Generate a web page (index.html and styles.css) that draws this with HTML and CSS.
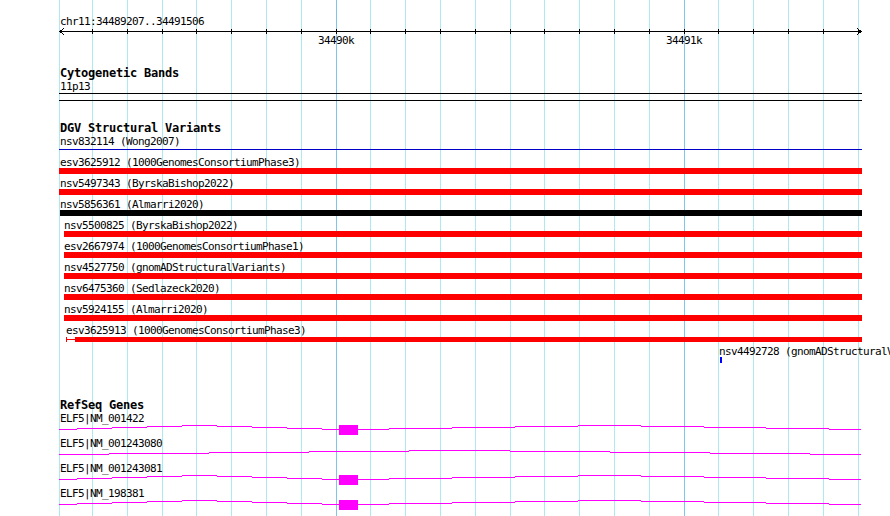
FILE: index.html
```html
<!DOCTYPE html>
<html>
  <head>
    <meta charset="UTF-8" />
    <title>chr11:34489207..34491506</title>
    <link rel="stylesheet" href="styles.css">
  </head>

  <body>
    <div id="browser">
      <!-- 网格线：每 100bp 一条，每 1kb 一条深色 -->
      <div class="grid">
        <span class="first"></span>
        <span></span><span></span><span></span><span></span><span></span><span></span><span></span>
        <span class="major"></span>
        <span></span><span></span><span></span><span></span><span></span><span></span><span></span><span></span><span></span>
        <span class="major"></span>
        <span></span><span></span><span></span><span></span><span></span>
      </div>

      <div class="panel">
        <!-- 标尺 -->
        <div class="ruler">
          <div class="label">chr11:34489207..34491506</div>
          <svg class="axis" width="803" height="20">
            <path d="M1 3.5H802M5 0L1 3.5L5 7M798 0L802 3.5L798 7" />
            <path d="M33.5 1V6M68.5 1V6M103.5 1V6M137.5 1V6M172.5 1V6M207.5 1V6M242.5 1V6M277.5 1V6M311.5 1V6M346.5 1V6M381.5 1V6M416.5 1V6M451.5 1V6M485.5 1V6M520.5 1V6M555.5 1V6M590.5 1V6M625.5 1V6M659.5 1V6M694.5 1V6M729.5 1V6M764.5 1V6M799.5 1V6" />
            <text x="259" y="16">34490k</text>
            <text x="607" y="16">34491k</text>
          </svg>
        </div>

        <!-- 细胞遗传学条带 -->
        <div class="track cyto">
          <h3>Cytogenetic Bands</h3>
          <div class="label">11p13</div>
          <div class="band"></div>
        </div>

        <!-- DGV 结构变异 -->
        <div class="track dgv">
          <h3>DGV Structural Variants</h3>
          <div class="feature clipped">
            <div class="label">nsv832114 (Wong2007)</div>
            <div class="line"></div>
          </div>
          <div class="feature clipped">
            <div class="label">esv3625912 (1000GenomesConsortiumPhase3)</div>
            <div class="bar"></div>
          </div>
          <div class="feature clipped">
            <div class="label">nsv5497343 (ByrskaBishop2022)</div>
            <div class="bar"></div>
          </div>
          <div class="feature" style="margin-left: 1px">
            <div class="label">nsv5856361 (Almarri2020)</div>
            <div class="bar black"></div>
          </div>
          <div class="feature" style="margin-left: 5px">
            <div class="label">nsv5500825 (ByrskaBishop2022)</div>
            <div class="bar"></div>
          </div>
          <div class="feature" style="margin-left: 5px">
            <div class="label">esv2667974 (1000GenomesConsortiumPhase1)</div>
            <div class="bar"></div>
          </div>
          <div class="feature" style="margin-left: 5px">
            <div class="label">nsv4527750 (gnomADStructuralVariants)</div>
            <div class="bar"></div>
          </div>
          <div class="feature" style="margin-left: 5px">
            <div class="label">nsv6475360 (Sedlazeck2020)</div>
            <div class="bar"></div>
          </div>
          <div class="feature" style="margin-left: 5px">
            <div class="label">nsv5924155 (Almarri2020)</div>
            <div class="bar"></div>
          </div>
          <div class="feature" style="margin-left: 7px">
            <div class="label">esv3625913 (1000GenomesConsortiumPhase3)</div>
            <div class="split">
              <span class="cap"></span>
              <span class="stem"></span>
              <span class="body"></span>
            </div>
          </div>
          <div class="feature" style="margin-left: 661px">
            <div class="label nudge">nsv4492728 (gnomADStructuralVariants)</div>
            <div class="tick"></div>
          </div>
        </div>

        <!-- RefSeq 基因 -->
        <div class="track genes">
          <h3>RefSeq Genes</h3>
          <div class="gene">
            <div class="label">ELF5|NM_001422</div>
            <svg width="803" height="12">
              <path d="M0 4.5H18M18 3.5H53M53 2.5H88M88 1.5H123M123 0.5H158M158 1.5H193M193 2.5H228M228 3.5H263M263 4.5H280" />
              <rect x="280" y="0" width="19" height="10" />
              <path d="M299 4.5H330M330 3.5H393M393 2.5H456M456 1.5H519M519 0.5H582M582 1.5H645M645 2.5H707M707 3.5H770M770 4.5H802" />
            </svg>
          </div>
          <div class="gene">
            <div class="label">ELF5|NM_001243080</div>
            <svg width="803" height="12">
              <path d="M0 4.5H50M50 3.5H150M150 2.5H250M250 1.5H350M350 0.5H451M451 1.5H551M551 2.5H651M651 3.5H751M751 4.5H802" />
            </svg>
          </div>
          <div class="gene">
            <div class="label">ELF5|NM_001243081</div>
            <svg width="803" height="12">
              <path d="M0 4.5H18M18 3.5H53M53 2.5H88M88 1.5H123M123 0.5H158M158 1.5H193M193 2.5H228M228 3.5H263M263 4.5H280" />
              <rect x="280" y="0" width="19" height="10" />
              <path d="M299 4.5H330M330 3.5H393M393 2.5H456M456 1.5H519M519 0.5H582M582 1.5H645M645 2.5H707M707 3.5H770M770 4.5H802" />
            </svg>
          </div>
          <div class="gene">
            <div class="label">ELF5|NM_198381</div>
            <svg width="803" height="12">
              <path d="M0 4.5H18M18 3.5H53M53 2.5H88M88 1.5H123M123 0.5H158M158 1.5H193M193 2.5H228M228 3.5H263M263 4.5H280" />
              <rect x="280" y="0" width="19" height="10" />
              <path d="M299 4.5H330M330 3.5H393M393 2.5H456M456 1.5H519M519 0.5H582M582 1.5H645M645 2.5H707M707 3.5H770M770 4.5H802" />
            </svg>
          </div>
        </div>
      </div>
    </div>
  </body>
</html>
```

FILE: styles.css
```css
/* 基因组浏览器图像 */
body {
  margin: 0;
  background-color: #fff;
  color: #000;
  font-family: "DejaVu Sans Mono", "Liberation Mono", monospace;
  font-size: 11px;
  letter-spacing: -0.62px;
}

#browser {
  position: relative;
  width: 890px;
  height: 516px;
  overflow: hidden;
}

/* 网格线在所有轨道下面 */
.grid {
  position: absolute;
  top: 0;
  left: 59px;
  width: 803px;
  height: 516px;
  display: flex;
  overflow: hidden;
}

.grid span {
  flex: 0 0 34.8px;
  box-sizing: border-box;
  border-left: 1px solid #aee9ef;
}

.grid span.first {
  flex-basis: 33px;
}

.grid span.major {
  border-left-color: #80c6ec;
}

.panel {
  position: relative;
  width: 803px;
  margin-left: 59px;
}

.label {
  height: 13px;
  line-height: 13px;
  padding-left: 1px;
  white-space: nowrap;
}

h3 {
  margin: 0;
  padding-left: 1px;
  font-size: 12px;
  font-weight: bold;
  letter-spacing: -0.22px;
  line-height: 13px;
  white-space: nowrap;
}

svg {
  display: block;
  shape-rendering: crispEdges;
}

/* 标尺 */
.ruler {
  padding-top: 15px;
}

.axis path {
  fill: none;
  stroke: #000;
  stroke-width: 1;
}

.axis text {
  font-size: 11px;
  fill: #000;
}

/* 条带 */
.cyto {
  margin-top: 19px;
}

.band {
  height: 6px;
  border-top: 1px solid #000;
  border-bottom: 1px solid #000;
}

/* 结构变异 */
.dgv {
  margin-top: 21px;
}

.feature {
  height: 21px;
}

.feature .label {
  height: 12px;
  padding-left: 0;
}

.feature.clipped .label {
  padding-left: 1px;
}

.feature .label.nudge {
  margin-left: -1px;
}

.line {
  height: 1px;
  margin-top: 2px;
  background-color: #0000c8;
}

.bar {
  height: 6px;
  background-color: #f00;
}

.bar.black {
  background-color: #000;
}

.split {
  display: flex;
  height: 5px;
  margin-top: 1px;
}

.split span {
  background-color: #f00;
}

.split .cap {
  width: 1px;
}

.split .stem {
  width: 8px;
  height: 1px;
  align-self: center;
}

.split .body {
  flex: 1;
}

.tick {
  width: 2px;
  height: 6px;
  background-color: #00f;
}

/* 基因 */
.genes {
  margin-top: 33px;
}

.gene svg path {
  fill: none;
  stroke: #f0f;
  stroke-width: 1;
}

.gene svg rect {
  fill: #f0f;
}
```
